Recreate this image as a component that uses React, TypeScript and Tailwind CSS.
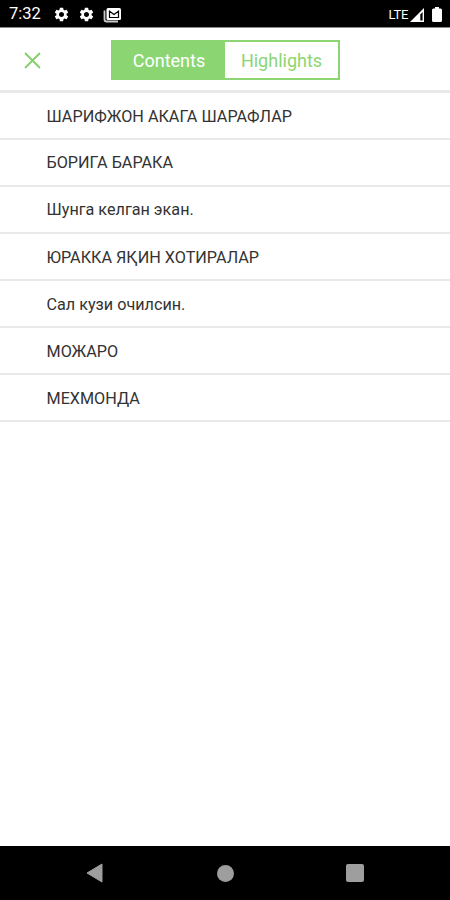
import { useState } from "react";
import { MdSettings } from "react-icons/md";

const chapters = [
  "ШАРИФЖОН АКАГА ШАРАФЛАР",
  "БОРИГА БАРАКА",
  "Шунга келган экан.",
  "ЮРАККА ЯҚИН ХОТИРАЛАР",
  "Сал кузи очилсин.",
  "МОЖАРО",
  "МЕХМОНДА",
];

function StatusBar() {
  return (
    <div className="flex h-7 shrink-0 items-center border-b border-[#8a8a8a] bg-black pt-[2px] pl-[9px] pr-[8px] text-white">
      <span className="w-[44px] text-[16.5px] leading-none">7:32</span>
      <MdSettings size={17} />
      <MdSettings size={17} className="ml-[8px]" />
      <svg width="19" height="16" viewBox="0 0 19 16" className="ml-[8px]">
        <path d="M1.5 3.5V12.5Q1.5 14.5 3.5 14.5H15" fill="none" stroke="#c9c9c9" strokeWidth="1.8" />
        <rect x="3.5" y="1" width="14.5" height="12" rx="1.5" fill="#fff" />
        <path d="M6.5 10.5V4.2L11 7.6L15.5 4.2V10.5Z" fill="none" stroke="#000" strokeWidth="1.2" />
      </svg>
      <span className="ml-auto text-[13px] leading-none tracking-[-0.3px]">LTE</span>
      <svg width="15" height="14" viewBox="0 0 15 14" className="ml-[2px]">
        <path d="M0 14L14 0V14Z" fill="#fff" />
        <path d="M10.3 6.5L12.6 4V12.6H10.3Z" fill="#000" />
      </svg>
      <svg width="10" height="15" viewBox="0 0 10 15" className="ml-[7px]">
        <path d="M3 0H7V1.5H8.5Q10 1.5 10 3V13.5Q10 15 8.5 15H1.5Q0 15 0 13.5V3Q0 1.5 1.5 1.5H3Z" fill="#fff" />
      </svg>
    </div>
  );
}

function NavBar() {
  return (
    <div className="flex h-[54px] shrink-0 items-center bg-black pl-[86px]">
      <svg width="17" height="20" viewBox="0 0 17 20">
        <path d="M16 1V19L1 10Z" fill="#9e9e9e" stroke="#9e9e9e" strokeLinejoin="round" />
      </svg>
      <div className="ml-[114px] size-[17px] rounded-full bg-[#9e9e9e]" />
      <div className="ml-[112px] size-[18px] rounded-[2px] bg-[#9e9e9e]" />
    </div>
  );
}

export default function App() {
  const [tab, setTab] = useState("contents");

  return (
    <div className="flex h-[900px] w-[450px] flex-col overflow-hidden bg-white font-[Roboto,sans-serif]">
      <StatusBar />

      <header className="flex h-[65px] shrink-0 items-center border-b-3 border-[#e9e9e9] pt-px pl-[24px]">
        <button aria-label="Close" className="pt-px">
          <svg width="17" height="17" viewBox="0 0 17 17" className="block">
            <path d="M1 1L16 16M16 1L1 16" stroke="#83cf6c" strokeWidth="1.8" />
          </svg>
        </button>
        <div className="ml-[70px] flex h-10 w-[229px] border-2 border-[#8bd672] text-[18px]">
          <button
            onClick={() => setTab("contents")}
            className={tab === "contents" ? "w-[112px] bg-[#8bd672] pt-[2px] text-white" : "w-[112px] pt-[2px] text-[#8bd672]"}
          >
            Contents
          </button>
          <button
            onClick={() => setTab("highlights")}
            className={tab === "highlights" ? "flex-1 bg-[#8bd672] pt-[2px] text-white" : "flex-1 pt-[2px] text-[#8bd672]"}
          >
            Highlights
          </button>
        </div>
      </header>

      <ul className="flex-1">
        {chapters.map((title, i) => (
          <li
            key={title}
            className={`flex items-center border-b-2 border-[#e9e9e9] pt-[3px] pl-[46.5px] text-[16.2px] text-[#333] ${
              i === 0 ? "h-[46.5px]" : "h-[47.1px]"
            }`}
          >
            {title}
          </li>
        ))}
      </ul>

      <NavBar />
    </div>
  );
}
